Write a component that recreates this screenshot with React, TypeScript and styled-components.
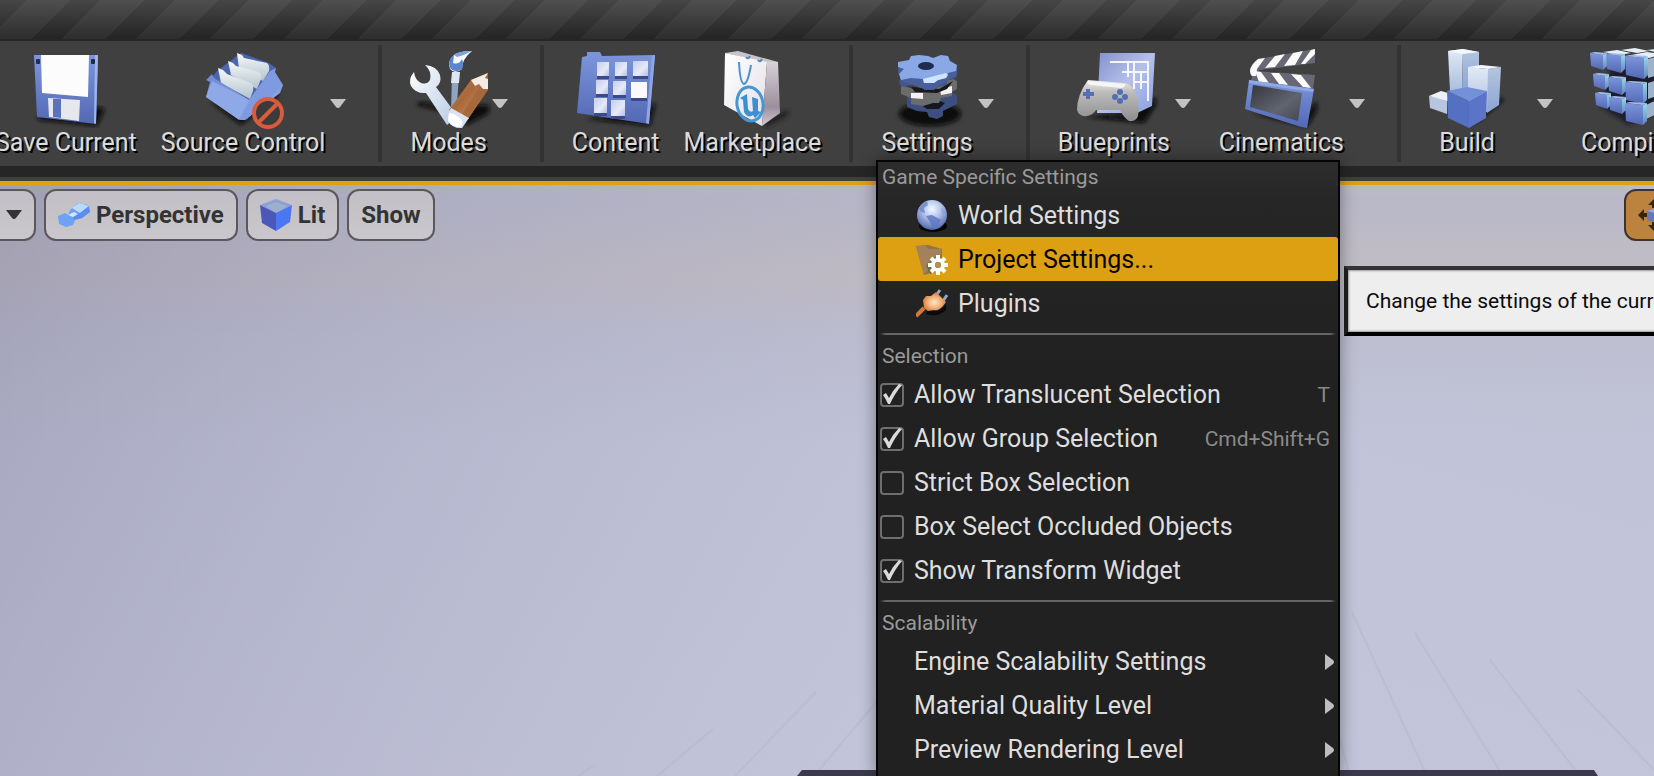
import React from "react";
import styled, { createGlobalStyle, css } from "styled-components";

const GlobalStyle = createGlobalStyle`
  *, *::before, *::after { box-sizing: border-box; }
  body {
    margin: 0;
    background: #262626;
    font-family: Roboto, "Liberation Sans", sans-serif;
    -webkit-font-smoothing: antialiased;
  }
  button, input { font: inherit; color: inherit; margin: 0; }
`;

const Editor = styled.div`
  position: relative;
  display: flex;
  flex-direction: column;
  height: 100vh;
  overflow: hidden;
`;

const TitleStrip = styled.header`
  flex: none;
  height: 41px;
  border-bottom: 2px solid #262626;
  background:
    linear-gradient(180deg, rgba(255, 255, 255, 0.15), rgba(0, 0, 0, 0.06)),
    linear-gradient(135deg, #262626 0 20%, #303030 20% 50%, #262626 50% 70%, #303030 70%) -3px 0 / 74px 74px;
`;

const Toolbar = styled.nav`
  flex: none;
  display: flex;
  padding: 4px 0;
  margin-left: -17px;
  border-bottom: 0;
  background: #404040;
`;

const ToolGroup = styled.div`
  display: flex;
  flex: none;
  & + & {
    margin-left: 16px;
    padding-left: 16px;
    border-left: 4px solid #333;
  }
`;

const PlainButton = styled.button`
  display: flex;
  border: 0;
  padding: 0;
  background: none;
  cursor: pointer;
`;

const ToolButton = styled(PlainButton)<{ $menu?: boolean }>`
  flex-direction: column;
  align-items: center;
  padding: 2px ${(p) => (p.$menu ? 0 : 12)}px 3px 12px;
`;

const ToolIcon = styled.svg`
  width: 80px;
  height: 80px;
  margin: 0 -2px;
  overflow: visible;
`;

const ToolLabel = styled.span`
  font-size: 25px;
  line-height: 32px;
  color: #dcdcdc;
  text-shadow: 2px 2px 0 #000;
  white-space: nowrap;
`;

const ToolArrow = styled(PlainButton)<{ $wide?: boolean }>`
  align-items: center;
  padding: 0 16px 0 ${(p) => (p.$wide ? 32 : 5)}px;
`;

const ViewportFrame = styled.main`
  flex: 1;
  min-height: 0;
  display: flex;
  flex-direction: column;
  border-top: 11px solid #262626;
`;

const Viewport = styled.section`
  flex: 1;
  min-height: 0;
  position: relative;
  border-top: 4px solid #dfa016;
  margin-top: 4px;
  box-shadow: 0 -4px 0 #404040;
  background:
    linear-gradient(180deg, #bcbac4 0, #b9b8c8 14px, #c1bdc3 90px, rgba(192, 188, 197, 0.9) 110px, rgba(188, 187, 203, 0.6) 150px, transparent 260px),
    linear-gradient(195deg, #c0c3d7, #c4c5da);
`;

const Scene = styled.svg`
  position: absolute;
  inset: 0;
  width: 100%;
  height: 100%;
`;

const ViewportBar = styled.div`
  position: relative;
  display: flex;
  justify-content: space-between;
  padding-top: 4px;
  margin: 0 -30px 0 -20px;
`;

const PillRow = styled.div`
  display: flex;
  gap: 8px;
`;

const Pill = styled.button<{ $active?: boolean }>`
  display: flex;
  align-items: center;
  gap: 6px;
  height: 52px;
  padding: 0 12px;
  border: 2px solid ${(p) => (p.$active ? "#3d3430" : "#5a585d")};
  border-radius: 12px;
  background: ${(p) => (p.$active ? "#bc833f" : "linear-gradient(180deg, #c2c0c6, #c9c7cb)")};
  color: #333;
  font-size: 24px;
  font-weight: 700;
  line-height: 28px;
  cursor: pointer;
`;

const Menu = styled.div`
  position: absolute;
  left: 876px;
  top: 160px;
  bottom: 0;
  width: 464px;
  border: 2px solid #050505;
  border-bottom: 0;
  background: linear-gradient(180deg, #2d2d2d 0, #262626 40px, #212121 200px);
  box-shadow: 0 0 16px rgba(0, 0, 0, 0.4);
`;

const MenuSection = styled.section`
  & + & {
    margin-top: 8px;
  }
  & + &::before {
    content: "";
    display: block;
    height: 2px;
    margin: 0 2px 6px;
    background: linear-gradient(90deg, transparent, #666 6px calc(100% - 6px), transparent);
  }
`;

const MenuHeading = styled.h2`
  margin: 0;
  padding: 3px 4px 4px;
  font-size: 21px;
  font-weight: 400;
  line-height: 24px;
  color: #9a9a9a;
`;

const rowStyle = css`
  display: flex;
  align-items: center;
  gap: 10px;
  width: 100%;
  height: 44px;
  border: 0;
  font-size: 25px;
  line-height: 30px;
  text-align: left;
  white-space: nowrap;
  cursor: pointer;
`;

const MenuItem = styled.button<{ $active?: boolean; $submenu?: boolean }>`
  ${rowStyle}
  padding: 1px 4px 0 ${(p) => (p.$submenu ? 36 : 38)}px;
  border-radius: 3px;
  background: ${(p) => (p.$active ? "#dda012" : "none")};
  color: ${(p) => (p.$active ? "#050505" : "#dedede")};
`;

const CheckRow = styled.label`
  ${rowStyle}
  padding: 1px 8px 0 2px;
  color: #dedede;
`;

const CheckCell = styled.span`
  display: grid;
  width: 24px;
  height: 24px;
  & > * { grid-area: 1 / 1; }
  & > svg { pointer-events: none; visibility: hidden; }
  & > input:checked + svg { visibility: visible; }
`;

const CheckInput = styled.input`
  appearance: none;
  width: 24px;
  height: 24px;
  border: 2px solid #6e6e6e;
  border-radius: 4px;
`;

const RowText = styled.span`
  flex: 1;
`;

const Shortcut = styled.kbd`
  font-family: inherit;
  font-size: 21px;
  line-height: 24px;
  color: #8a8a8a;
`;

const Tooltip = styled.div`
  position: absolute;
  left: 1344px;
  top: 266px;
  padding: 19px 18px;
  border: 4px solid #000;
  border-top-color: #333;
  border-left-color: #1c1c1c;
  background: #eee;
  box-shadow: inset 0 0 2px 1px #999;
  font-size: 21px;
  line-height: 24px;
  color: #0a0a0a;
  white-space: nowrap;
`;

const DownArrow = ({ color = "#c3c3c3" }: { color?: string }) => (
  <svg width="16" height="10" viewBox="0 0 16 10">
    <path d="M0 0H16L10 8Q8 10 6 8Z" fill={color} />
  </svg>
);

const RightArrow = () => (
  <svg width="9" height="16" viewBox="0 0 9 16">
    <path d="M0 0L8 6Q10 8 8 10L0 16Z" fill="#bdbdbd" />
  </svg>
);

const Check = () => (
  <svg width="24" height="24" viewBox="0 0 24 24">
    <path d="M3 12L6 10L9 15Q13 7 19 1L22 2Q15 10 10 21H8Q6 16 3 12Z" fill="#dadada" />
  </svg>
);

const Defs = () => (
  <svg width="0" height="0" style={{ position: "absolute" }} aria-hidden="true">
    <defs>
      <linearGradient id="blue" x1="0" y1="0" x2="0" y2="1">
        <stop offset="0" stopColor="#7c96dc" /><stop offset="1" stopColor="#5368b4" />
      </linearGradient>
      <linearGradient id="sky" x1="0" y1="0" x2="1" y2="1">
        <stop offset="0" stopColor="#6f88d0" /><stop offset="1" stopColor="#93aeea" />
      </linearGradient>
      <linearGradient id="paper" x1="0" y1="0" x2="0" y2="1">
        <stop offset="0" stopColor="#f6f9fa" /><stop offset="1" stopColor="#b3c3cc" />
      </linearGradient>
      <linearGradient id="steel" x1="0" y1="0" x2="1" y2="1">
        <stop offset="0" stopColor="#ffffff" /><stop offset="1" stopColor="#b9cbe4" />
      </linearGradient>
      <linearGradient id="wood" x1="0" y1="0" x2="1" y2="1">
        <stop offset="0" stopColor="#c98f62" /><stop offset=".45" stopColor="#a9683a" /><stop offset="1" stopColor="#d59a6a" />
      </linearGradient>
      <linearGradient id="tile" x1="0" y1="0" x2="1" y2="1">
        <stop offset="0" stopColor="#c5cdea" /><stop offset=".6" stopColor="#e6e9f7" /><stop offset="1" stopColor="#b4bfe4" />
      </linearGradient>
      <linearGradient id="bag" x1="0" y1="0" x2="1" y2="1">
        <stop offset="0" stopColor="#fff" /><stop offset="1" stopColor="#e3dfe6" />
      </linearGradient>
      <linearGradient id="bagSide" x1="0" y1="0" x2="0" y2="1">
        <stop offset="0" stopColor="#d8d1d9" /><stop offset=".7" stopColor="#9b8f9c" /><stop offset="1" stopColor="#d3cbd5" />
      </linearGradient>
      <linearGradient id="pad" x1="0" y1="0" x2="0" y2="1">
        <stop offset="0" stopColor="#ececec" /><stop offset=".3" stopColor="#bcbcbc" /><stop offset="1" stopColor="#8d8d8d" />
      </linearGradient>
      <linearGradient id="sheet" x1="0" y1="0" x2="1" y2="1">
        <stop offset="0" stopColor="#8490cc" /><stop offset=".5" stopColor="#b5c0ea" /><stop offset="1" stopColor="#8ba0e0" />
      </linearGradient>
      <linearGradient id="screen" x1="0" y1="0" x2="1" y2="1">
        <stop offset="0" stopColor="#35373c" /><stop offset=".6" stopColor="#606470" /><stop offset="1" stopColor="#44474e" />
      </linearGradient>
      <linearGradient id="tower" x1="0" y1="0" x2="0" y2="1">
        <stop offset="0" stopColor="#e2ebf6" /><stop offset="1" stopColor="#a9bdde" />
      </linearGradient>
      <linearGradient id="towerSide" x1="0" y1="0" x2="0" y2="1">
        <stop offset="0" stopColor="#b3c5df" /><stop offset="1" stopColor="#8ba4d2" />
      </linearGradient>
      <linearGradient id="cubeSide" x1="0" y1="0" x2="0" y2="1">
        <stop offset="0" stopColor="#9adbe4" /><stop offset="1" stopColor="#5f84c4" />
      </linearGradient>
      <radialGradient id="globe" cx=".5" cy=".3" r=".7">
        <stop offset="0" stopColor="#f2fbff" /><stop offset=".4" stopColor="#b9c8ec" /><stop offset="1" stopColor="#5067ac" />
      </radialGradient>
      <radialGradient id="plug" cx=".5" cy=".55" r=".6">
        <stop offset="0" stopColor="#ffe6c4" /><stop offset=".5" stopColor="#f0b078" /><stop offset="1" stopColor="#c96a2c" />
      </radialGradient>
      <filter id="soft"><feGaussianBlur stdDeviation="2" /></filter>
    </defs>
  </svg>
);

const SaveArt = () => (
  <>
    <path d="M12 68L72 60L79 62L71 79L12 73Z" fill="#111" filter="url(#soft)" />
    <path d="M8 8H72L70 77L11 70Z" fill="url(#blue)" />
    <path d="M69 8H72L70 77L68 76Z" fill="#9db4ee" />
    <path d="M15 8H63L62 50L16 46Z" fill="#fcfcfc" />
    <path d="M22 51L54 53L53 74L23 70Z" fill="#e6e8ee" />
    <path d="M27 52L35 52L35 71L27 70Z" fill="#5a72b8" />
    <rect x="10" y="12" width="4" height="5" rx="1" fill="#222c4c" />
    <rect x="65" y="12" width="4" height="5" rx="1" fill="#222c4c" />
  </>
);

const SourceArt = () => (
  <>
    <path d="M6 54L38 78L76 48L72 44L36 66Z" fill="#0c0c0c" filter="url(#soft)" />
    <path d="M14 24L38 6L66 16L73 21L68 26L46 54L6 34Z" fill="#4d64ae" />
    <path d="M34 6L39 8L41 11L64 16Q67 18 66 24L60 34L36 22Z" fill="url(#paper)" />
    <path d="M25 14L30 16L33 19L56 25Q59 27 58 32L54 42L28 28Z" fill="url(#paper)" />
    <path d="M15 21L20 23L24 27L48 36Q51 38 50 44L47 52L18 36Z" fill="url(#paper)" />
    <path d="M3 33L9 27L11 31L46 53L80 38L77 46L42 73L38 73L3 50L7 35Z" fill="url(#sky)" />
    <path d="M46 53L67 24L73 21L72 25L80 38L44 72L36 73Z" fill="#7f9ae0" />
    <path d="M46 53L36 73L3 50L9 34Z" fill="#8ea8e8" />
    <circle cx="65" cy="66" r="14" fill="#3b3b3b" stroke="#d85b3c" strokeWidth="4" />
    <path d="M55 76L75 56" stroke="#d85b3c" strokeWidth="4" />
  </>
);

const ModesArt = () => (
  <>
    <path d="M8 58Q22 62 42 66L58 78L80 66V58H60L44 64L20 56Q8 54 8 58Z" fill="#0a0a0a" filter="url(#soft)" />
    <path d="M43 26H50L48 58L42 66Z" fill="#8fa4c2" />
    <path d="M43 25H51L50 36H42Z" fill="#dfe8f2" />
    <path d="M63 4Q50 4 45 8Q38 14 41 22Q46 28 53 22Q53 12 63 4Z" fill="#f4f9ff" />
    <path d="M45 8Q38 13 41 21Q46 27 53 22Q55 17 53 12Q50 18 44 16Z" fill="#5e84cc" />
    <path d="M63 4Q50 4 45 8L48 10Q56 8 63 4Z" fill="#7fa0dc" />
    <path d="M5 25Q-1 32 2 39Q7 47 17 46L38 78L43 74L44 63L27 40Q33 36 31 28Q28 19 16 18Q23 24 21 33Q18 38 12 36Q6 33 5 25Z" fill="url(#steel)" />
    <path d="M79 26L62 33L40 63L59 72L79 42Z" fill="url(#wood)" />
    <path d="M71 39L79 43L59 72L52 69Z" fill="#a7683c" />
    <path d="M79 26L62 33L66 39L70 37L74 42L79 42Z" fill="#f4ece4" />
    <path d="M79 26L76 31L79 32Z" fill="#a0643a" />
    <path d="M42 61L60 71L53 81Q44 82 39 74Q38 68 42 61Z" fill="#d9e4f0" />
    <path d="M40 66Q46 66 53 73Q54 78 51 80Q42 80 39 74Z" fill="#fbfdff" />
  </>
);

const contentTiles = [
  [21, 15, 12, 14], [39, 15, 12, 14], [57, 14, 15, 15],
  [20, 33, 12, 14], [37, 34, 13, 14], [55, 35, 16, 16],
  [18, 51, 13, 15], [35, 53, 14, 16],
];

const ContentArt = () => (
  <>
    <path d="M60 66L80 56L74 79L10 72Z" fill="#111" filter="url(#soft)" />
    <path d="M6 10L11 9V5H24L26 9L79 8L73 77L1 66Z" fill="url(#blue)" />
    <path d="M76 9L79 8L73 77L70 76Z" fill="#8ea6e6" />
    {contentTiles.map(([x, y, w, h], i) => (
      <g key={i}>
        <rect x={x} y={y + 3} width={w} height={h} fill="#3b4a86" />
        <rect x={x} y={y} width={w} height={h} fill={i === 5 ? "#fafafe" : "url(#tile)"} />
      </g>
    ))}
  </>
);

const MarketArt = () => (
  <>
    <path d="M50 74L78 62L74 70L54 80Z" fill="#222" filter="url(#soft)" />
    <path d="M13 6L26 4L66 15L55 16Z" fill="#c9c3cb" />
    <path d="M13 6L55 15L50 79L12 58Z" fill="url(#bag)" />
    <path d="M55 15L66 15L68 66L50 79Z" fill="url(#bagSide)" />
    <path d="M34 10Q36 13 38 9M46 13Q48 16 50 12" stroke="#4e86b4" strokeWidth="2" fill="none" />
    <path d="M27 15Q28 36 32 37Q36 36 39 18" stroke="#4a94cc" strokeWidth="2" fill="none" />
    <ellipse cx="38" cy="57" rx="13" ry="17" fill="none" stroke="#4496d4" strokeWidth="3" transform="rotate(-10 38 57)" />
    <path d="M28 51L35 47L36 62Q38 66 41 64L40 50L46 52V64L49 65L43 71L41 68Q36 72 32 65L31 53Z" fill="#3c90d0" />
  </>
);

const gearTop = "M11 15L22 13L24 9L32 8L41 9L46 11L54 8L61 9L63 14L70 18L69 24L61 26L59 31L51 33L47 36L37 36L36 32L24 31L14 33L12 27L17 22L11 20Z";

const SettingsArt = () => (
  <>
    <ellipse cx="43" cy="67" rx="31" ry="12" fill="#080808" filter="url(#soft)" />
    <path d="M20 50L66 46L70 48V57L62 61L56 64V69L50 72L42 70L40 65L30 64L20 60Z" fill="#3c4f80" />
    <path d="M28 54L42 50L58 56L52 62H40Z" fill="#14171f" />
    <path d="M14 38L26 42L66 32L70 34V42L65 45V49L54 51L52 56H46L36 59L24 57V51L14 47Z" fill="#6c6c6c" />
    <path d="M24 46H36V52L24 51ZM53 42L65 39V46L54 48Z" fill="#f2f2f2" />
    <path d="M24 40L52 42L66 34L60 42L50 46L28 45Z" fill="#191919" />
    <path d={gearTop} transform="translate(0 7)" fill="#42578f" />
    <path d="M11 20L14 34L37 42H47L70 28V20L40 28Z" fill="#495f9a" />
    <path d={gearTop} fill="#8ba8e6" />
    <path d="M36 32L59 26L61 28L59 31L51 33L47 36H37Z" fill="#cfe4ff" />
    <ellipse cx="39" cy="19" rx="8" ry="4" fill="#1f2c50" />
  </>
);

const BlueprintsArt = () => (
  <>
    <path d="M10 70L70 76L82 58V50L60 66Z" fill="#070707" filter="url(#soft)" />
    <path d="M26 6H81L78 59L63 66H23Z" fill="url(#sheet)" />
    <path d="M36 15H74V54M54 15V30M60 15V42M48 25H74M60 35H74M67 25V42" stroke="#f4f7ff" strokeWidth="2" fill="none" />
    <path d="M14 33L51 36Q59 38 62 47Q66 58 64 69Q62 75 55 74Q50 71 46 63H22Q19 68 13 69Q5 70 3 63Q3 48 14 33Z" fill="url(#pad)" />
    <path d="M14 34L51 37Q52 40 47 41L17 38Q12 37 14 34Z" fill="#f6f6f6" />
    <path d="M14 42V52M9 47H20" stroke="#5470b4" strokeWidth="4" />
    <circle cx="46" cy="45" r="3" fill="#5470b4" /><circle cx="46" cy="54" r="3" fill="#5470b4" />
    <circle cx="41" cy="50" r="3" fill="#5470b4" /><circle cx="51" cy="50" r="3" fill="#5470b4" />
  </>
);

const CinematicsArt = () => (
  <>
    <path d="M60 70L76 54V64L66 80L10 66Z" fill="#0c0c0c" filter="url(#soft)" />
    <path d="M17 12L74 2V16L18 23Q16 30 12 31Q4 22 17 12Z" fill="#676873" />
    <path d="M14 24L74 28L72 42L10 33Z" fill="#676873" />
    <path d="M17 12L24 11L16 22L15 29H11Q5 22 17 12ZM34 9L44 7L34 20L24 21ZM52 6L62 4L54 18L43 19ZM70 3L74 2V7L64 17L60 17Z" fill="#fafafa" />
    <path d="M14 24L20 25L28 36L18 35ZM30 26L38 26L47 38L38 37ZM50 27L60 28L70 41L62 40Z" fill="#fafafa" />
    <path d="M8 33L73 42L66 81L60 80L4 62Z" fill="url(#blue)" />
    <path d="M8 33L73 42L72 45L8 36Z" fill="#8fa8e6" />
    <path d="M12 38L61 46L57 74L9 60Z" fill="url(#screen)" />
  </>
);

const BuildArt = () => (
  <>
    <path d="M44 80L76 54V50L60 60Z" fill="#0c0c0c" filter="url(#soft)" />
    <path d="M21 4L36 2L35 44H23Z" fill="url(#tower)" />
    <path d="M36 2L52 5V44H35Z" fill="url(#towerSide)" />
    <path d="M21 4L36 2L52 5L36 7Z" fill="#f3f8ff" />
    <path d="M41 20L61 22V65H41Z" fill="url(#tower)" />
    <path d="M61 22L74 20L72 58L60 66Z" fill="url(#towerSide)" />
    <path d="M41 20L54 18L74 20L61 22Z" fill="#f3f8ff" />
    <path d="M2 49L20 52V67L3 61Z" fill="#b7c5de" />
    <path d="M2 49L14 44L21 46V54Z" fill="#edf2fa" />
    <path d="M20 44L42 54V81L21 71Z" fill="#5470c0" />
    <path d="M42 54L60 44L59 71L42 81Z" fill="#5b74c8" />
    <path d="M20 44L40 40L60 44L42 54Z" fill="#7390d8" />
  </>
);

const cubes = [
  [3, 6, 13], [19, 7, 15], [38, 9, 19],
  [6, 27, 12], [21, 30, 14], [38, 35, 18],
  [8, 46, 12], [22, 50, 13], [38, 56, 18],
];

const CompileArt = () => (
  <>
    <path d="M14 60L42 78L74 62V20H24Z" fill="#1a1e2a" filter="url(#soft)" />
    <path d="M16 5L30 3L44 6L32 8ZM34 3L48 1L62 4L50 6ZM44 8L60 5L76 7L62 11ZM60 3L70 2L80 4L72 6Z" fill="#e6eef6" />
    <path d="M61 12L78 8V26L61 31ZM61 36L78 30V46L61 52ZM59 58L76 50V64L59 72Z" fill="#9fb2cc" />
    {cubes.map(([x, y, s], i) => (
      <g key={i}>
        <path d={`M${x} ${y}L${x + s} ${y + 2}V${y + s + 4}L${x + 1} ${y + s}Z`} fill="url(#blue)" />
        <path d={`M${x + s} ${y + 2}L${x + s + 4} ${y}V${y + s}L${x + s} ${y + s + 4}Z`} fill="url(#cubeSide)" />
        <path d={`M${x} ${y}L${x + 5} ${y - 1}L${x + s + 4} ${y}L${x + s} ${y + 2}Z`} fill="#a0bcec" />
      </g>
    ))}
  </>
);

const GlobeIcon = () => (
  <svg width="32" height="34" viewBox="0 0 32 34">
    <ellipse cx="17" cy="27" rx="14" ry="6" fill="#050505" />
    <circle cx="16" cy="16" r="15" fill="url(#globe)" />
    <path d="M3 10Q6 4 11 2L12 6L8 9L9 14L5 13Z" fill="#6d86cc" opacity=".8" />
    <path d="M10 17L16 16L25 21L21 28L17 30L14 23Z" fill="#5e78c4" opacity=".85" />
    <path d="M25 9L29 11L30 16L26 15Z" fill="#88a4dc" opacity=".7" />
  </svg>
);

const FolderGearIcon = () => (
  <svg width="32" height="32" viewBox="0 0 32 32">
    <path d="M0 2L12 1L26 5V26L8 31Z" fill="#94714a" />
    <path d="M0 2L10 2L12 5L26 5L24 14L10 28L8 31Z" fill="#a3815a" />
    <path d="M24 12L16 14L10 22L14 30L22 27Z" fill="#5d6a34" opacity=".7" />
    <circle cx="22" cy="21" r="5" fill="none" stroke="#fdfdfd" strokeWidth="4" />
    <g stroke="#fdfdfd" strokeWidth="4">
      <path d="M22 11V16M22 26V31M12 21H17M27 21H32M15 14L18 17M26 25L29 28M29 14L26 17M18 25L15 28" />
    </g>
    <circle cx="22" cy="21" r="3" fill="#b29250" />
  </svg>
);

const PlugIcon = () => (
  <svg width="32" height="32" viewBox="0 0 32 32">
    <path d="M12 22Q24 26 30 16L30 22Q22 30 10 26Z" fill="#0a0a0a" />
    <path d="M19 9L24 2M27 13L31 7" stroke="#8ea9c4" strokeWidth="3" />
    <path d="M0 28L8 20" stroke="#d2783a" strokeWidth="4" />
    <path d="M7 12L10 8L15 8L20 4L30 14L27 18Q23 23 18 22L12 23L8 20Z" fill="url(#plug)" />
  </svg>
);

const CameraIcon = () => (
  <svg width="32" height="32" viewBox="0 0 32 32">
    <path d="M0 17L7 14L10 16L12 11L20 4L30 6L32 13L24 19L17 21L15 26L8 28L1 25Z" fill="#6da2f4" />
    <path d="M14 9L21 4L31 7L22 14Z" fill="#b9dcfb" />
    <path d="M22 14L31 7L32 13L24 19L16 21L15 16L10 16L18 15Z" fill="#5b8df0" />
    <path d="M10 16L16 13L20 15L15 18Z" fill="#d3e6fa" />
  </svg>
);

const CubeIcon = () => (
  <svg width="32" height="32" viewBox="0 0 32 32">
    <path d="M0 6L16 0L32 6L16 14Z" fill="#8f9fd6" />
    <path d="M6 7L16 3L27 7L16 14Z" fill="#a3b6cc" opacity=".7" />
    <path d="M0 6L16 14V32L2 24Z" fill="#4c58b8" />
    <path d="M32 6L16 14V32L30 23Z" fill="#4a76f2" />
  </svg>
);

const MoveIcon = () => (
  <svg width="32" height="32" viewBox="0 0 32 32">
    <g fill="#332714">
      <path d="M16 0L22 6H18V9H14V6H10Z" /><path d="M16 32L22 26H18V23H14V26H10Z" />
      <path d="M0 16L6 10V14H9V18H6V22Z" /><path d="M32 16L26 10V14H23V18H26V22Z" />
    </g>
    <path d="M9 12L16 10L23 12V20L16 23L9 21Z" fill="#6876bc" />
    <path d="M9 12L16 10L23 12L17 14Z" fill="#93a8e4" />
    <path d="M17 14L23 12V20L17 23Z" fill="#a7a6d4" />
  </svg>
);

type Tool = { label: string; art: () => React.JSX.Element; menu?: boolean; wide?: boolean };

const toolGroups: Tool[][] = [
  [{ label: "Save Current", art: SaveArt }, { label: "Source Control", art: SourceArt, menu: true }],
  [{ label: "Modes", art: ModesArt, menu: true }],
  [{ label: "Content", art: ContentArt }, { label: "Marketplace", art: MarketArt }],
  [{ label: "Settings", art: SettingsArt, menu: true }],
  [{ label: "Blueprints", art: BlueprintsArt, menu: true }, { label: "Cinematics", art: CinematicsArt, menu: true }],
  [{ label: "Build", art: BuildArt, menu: true, wide: true }, { label: "Compile", art: CompileArt }],
];

const selectionOptions = [
  { label: "Allow Translucent Selection", checked: true, keys: "T" },
  { label: "Allow Group Selection", checked: true, keys: "Cmd+Shift+G" },
  { label: "Strict Box Selection", checked: false },
  { label: "Box Select Occluded Objects", checked: false },
  { label: "Show Transform Widget", checked: true },
];

const ViewportScene = () => (
  <Scene viewBox="0 0 1654 591" preserveAspectRatio="none" aria-hidden="true">
    <defs>
      <linearGradient id="shadeLeft" x1="0" y1="0" x2="1" y2=".25">
        <stop offset="0" stopColor="#8785a0" stopOpacity=".5" />
        <stop offset=".4" stopColor="#9a9bb8" stopOpacity=".34" />
        <stop offset="1" stopColor="#a8aac4" stopOpacity="0" />
      </linearGradient>
    </defs>
    <path d="M0 0H1100V591H0Z" fill="url(#shadeLeft)" />
    <g stroke="#b4b5c8" strokeWidth="2" fill="none" opacity=".45">
      <path d="M816 507L735 591M713 544L657 591M595 580L578 591M878 515L814 591" />
      <path d="M1352 427L1427 591M1415 448L1503 591M1490 475L1580 591M1577 504L1654 585M1336 540L1350 591" />
    </g>
    <path d="M797 591L802 585H1594L1598 591Z" fill="#3a3a4c" />
  </Scene>
);

export default function App() {
  return (
    <Editor>
      <GlobalStyle />
      <Defs />
      <TitleStrip />
      <Toolbar aria-label="Main toolbar">
        {toolGroups.map((group, i) => (
          <ToolGroup key={i}>
            {group.map(({ label, art: Art, menu, wide }) => (
              <React.Fragment key={label}>
                <ToolButton $menu={menu}>
                  <ToolIcon viewBox="0 0 80 80" aria-hidden="true"><Art /></ToolIcon>
                  <ToolLabel>{label}</ToolLabel>
                </ToolButton>
                {menu && (
                  <ToolArrow $wide={wide} aria-label={`${label} options`}><DownArrow /></ToolArrow>
                )}
              </React.Fragment>
            ))}
          </ToolGroup>
        ))}
      </Toolbar>
      <ViewportFrame>
        <Viewport>
          <ViewportScene />
          <ViewportBar>
            <PillRow>
              <Pill aria-label="Viewport options"><svg width="6" height="10" aria-hidden="true" /><DownArrow color="#333" /></Pill>
              <Pill><CameraIcon />Perspective</Pill>
              <Pill><CubeIcon />Lit</Pill>
              <Pill>Show</Pill>
            </PillRow>
            <Pill $active aria-label="Translate"><MoveIcon /></Pill>
          </ViewportBar>
        </Viewport>
      </ViewportFrame>
      <Menu role="menu" aria-label="Settings">
        <MenuSection>
          <MenuHeading>Game Specific Settings</MenuHeading>
          <MenuItem><GlobeIcon />World Settings</MenuItem>
          <MenuItem $active><FolderGearIcon />Project Settings...</MenuItem>
          <MenuItem><PlugIcon />Plugins</MenuItem>
        </MenuSection>
        <MenuSection>
          <MenuHeading>Selection</MenuHeading>
          {selectionOptions.map(({ label, checked, keys }) => (
            <CheckRow key={label}>
              <CheckCell>
                <CheckInput type="checkbox" defaultChecked={checked} />
                <Check />
              </CheckCell>
              <RowText>{label}</RowText>
              {keys && <Shortcut>{keys}</Shortcut>}
            </CheckRow>
          ))}
        </MenuSection>
        <MenuSection>
          <MenuHeading>Scalability</MenuHeading>
          {["Engine Scalability Settings", "Material Quality Level", "Preview Rendering Level"].map((label) => (
            <MenuItem key={label} $submenu>
              <RowText>{label}</RowText>
              <RightArrow />
            </MenuItem>
          ))}
        </MenuSection>
      </Menu>
      <Tooltip role="tooltip">Change the settings of the currently</Tooltip>
    </Editor>
  );
}
